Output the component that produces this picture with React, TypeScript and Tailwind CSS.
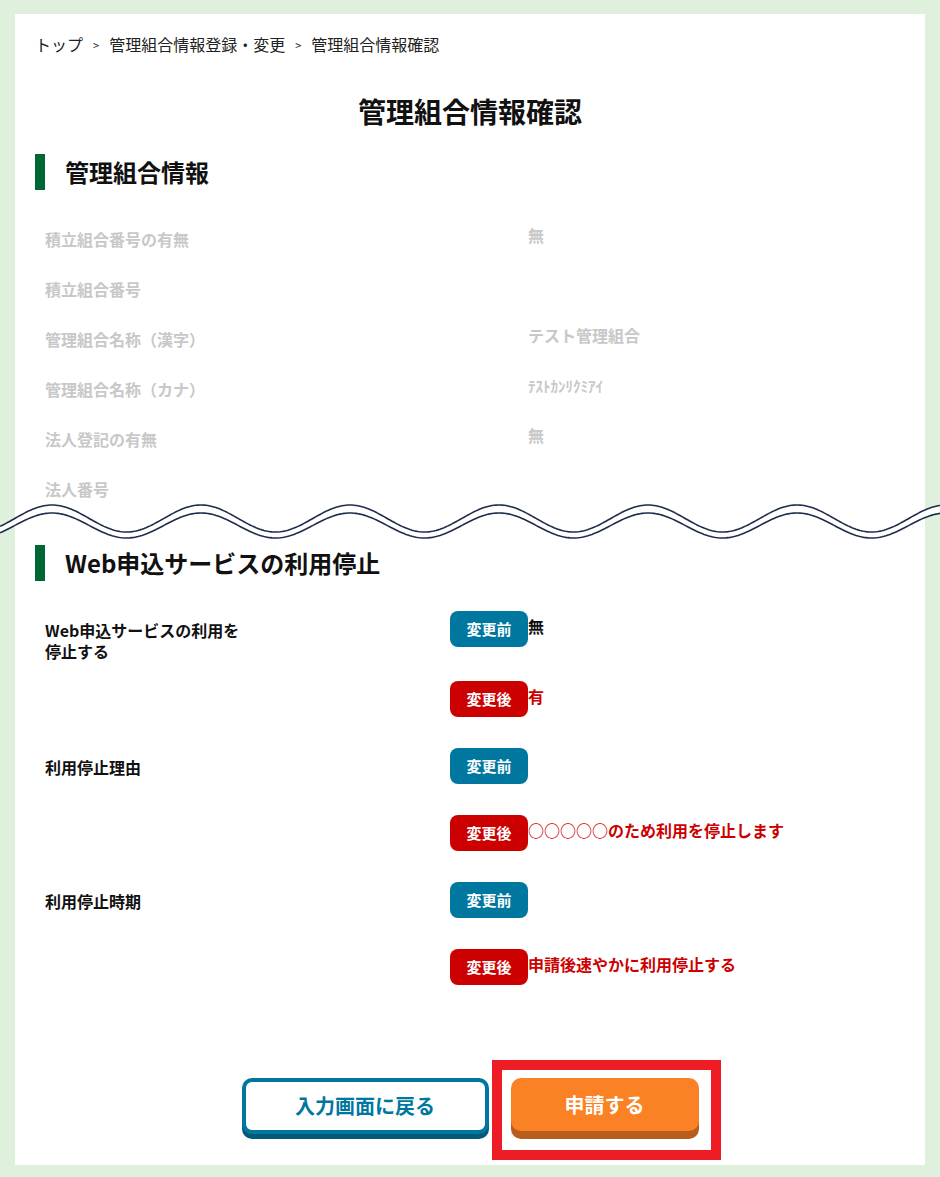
import React from "react";

function wavePoints(center: number, amp: number, period: number, phase: number) {
  const pts: [number, number][] = [];
  for (let x = 0; x <= 940; x += 2) {
    const y = center - amp * Math.cos((2 * Math.PI * (x - phase)) / period);
    pts.push([x, y]);
  }
  return pts;
}

function Wave() {
  const top = wavePoints(19.5, 13.5, 149, 52);
  const bot = wavePoints(26.5, 12.5, 149, 52);
  const toD = (p: [number, number][]) =>
    p.map((q, i) => `${i === 0 ? "M" : "L"}${q[0]},${q[1].toFixed(2)}`).join(" ");
  const fill =
    toD(top) +
    " " +
    bot
      .slice()
      .reverse()
      .map((q) => `L${q[0]},${q[1].toFixed(2)}`)
      .join(" ") +
    " Z";
  return (
    <svg width="940" height="45" viewBox="0 0 940 45" className="block -ml-[35px] max-w-none">
      <path d={fill} fill="#ffffff" />
      <path d={toD(top)} fill="none" stroke="#1f2c4c" strokeWidth="1.6" />
      <path d={toD(bot)} fill="none" stroke="#1f2c4c" strokeWidth="1.6" />
    </svg>
  );
}

function SectionHeader({ children }: { children: React.ReactNode }) {
  return (
    <div className="flex items-center h-[36px]">
      <div className="w-[10px] h-[36px] bg-[#006633]" />
      <h2 className="ml-[20px] text-[24px] leading-[36px] font-bold text-[#111]">{children}</h2>
    </div>
  );
}

const greyRows: { label: string; value: string; small?: boolean }[] = [
  { label: "積立組合番号の有無", value: "無" },
  { label: "積立組合番号", value: "" },
  { label: "管理組合名称（漢字）", value: "テスト管理組合" },
  { label: "管理組合名称（カナ）", value: "ﾃｽﾄｶﾝﾘｸﾐｱｲ", small: true },
  { label: "法人登記の有無", value: "無" },
  { label: "法人番号", value: "" },
];

type Row = {
  label?: React.ReactNode;
  kind: "before" | "after";
  value: string;
  mb: string;
};

const rows: Row[] = [
  {
    label: (
      <>
        Web申込サービスの利用を
        <br />
        停止する
      </>
    ),
    kind: "before",
    value: "無",
    mb: "mb-[34px]",
  },
  { kind: "after", value: "有", mb: "mb-[31px]" },
  { label: "利用停止理由", kind: "before", value: "", mb: "mb-[31px]" },
  { kind: "after", value: "○○○○○のため利用を停止します", mb: "mb-[31px]" },
  { label: "利用停止時期", kind: "before", value: "", mb: "mb-[31px]" },
  { kind: "after", value: "申請後速やかに利用停止する", mb: "" },
];

export default function App() {
  return (
    <div className="w-[940px] min-h-[1177px] bg-[#dff0dc] pt-[14px] pb-[12px] px-[15px] font-['Noto_Sans_CJK_JP',sans-serif]">
      <div className="bg-white h-[1151px] px-[20px] pt-[16px]">
        {/* breadcrumb */}
        <nav className="flex items-center text-[16px] leading-[24px] text-[#222]">
          <span>トップ</span>
          <span className="mx-[10px] text-[11px] leading-[24px] pt-[3px]">&gt;</span>
          <span>管理組合情報登録・変更</span>
          <span className="mx-[10px] text-[11px] leading-[24px] pt-[3px]">&gt;</span>
          <span>管理組合情報確認</span>
        </nav>

        <h1 className="mt-[34px] text-center text-[28px] leading-[40px] font-bold text-[#111]">
          管理組合情報確認
        </h1>

        <div className="mt-[23px]">
          <SectionHeader>管理組合情報</SectionHeader>
        </div>

        <div className="mt-[24px] h-[288px] overflow-hidden">
          {greyRows.map((r, i) => (
            <div key={i} className="flex h-[50px] text-[#c8c8c8] font-bold">
              <div className="w-[493px] pl-[10px] pt-[13px] text-[16px] leading-[24px]">{r.label}</div>
              <div className={`leading-[24px] ${r.small ? "text-[15px] pt-[10px]" : "text-[16px] pt-[9px]"}`}>
                {r.value}
              </div>
            </div>
          ))}
        </div>

        <div className="-mt-[3px]">
          <Wave />
        </div>

        <div className="mt-[1px]">
          <SectionHeader>Web申込サービスの利用停止</SectionHeader>
        </div>

        <div className="mt-[30px]">
          {rows.map((r, i) => (
            <div key={i} className={`flex h-[36px] ${r.mb}`}>
              <div className="w-[415px] shrink-0 pl-[10px] pt-[9px] text-[16px] leading-[21px] font-bold text-[#111]">
                {r.label}
              </div>
              <div
                className={`w-[78px] h-[36px] shrink-0 rounded-[8px] flex items-center justify-center text-white font-bold text-[15px] ${
                  r.kind === "before" ? "bg-[#00779f]" : "bg-[#cc0000]"
                }`}
              >
                {r.kind === "before" ? "変更前" : "変更後"}
              </div>
              <div
                className={`pt-[5px] text-[16px] leading-[20px] font-bold ${
                  r.kind === "before" ? "text-[#111]" : "text-[#cc0000]"
                }`}
              >
                {r.value}
              </div>
            </div>
          ))}
        </div>

        <div className="mt-[93px] flex justify-center gap-[22px]">
          <button className="w-[247px] h-[56px] rounded-[10px] border-[4px] border-[#00779f] bg-white text-[#00779f] text-[20px] font-bold shadow-[0_5px_0_#005a78]">
            入力画面に戻る
          </button>
          <div className="relative">
            <button className="w-[188px] h-[53px] rounded-[10px] bg-[#fb8224] text-white text-[20px] font-bold shadow-[0_8px_0_#b95d1c]">
              申請する
            </button>
            <div className="absolute left-[-19px] right-[-22px] top-[-18px] bottom-[-26px] border-[10px] border-[#ee1c24] pointer-events-none" />
          </div>
        </div>
      </div>
    </div>
  );
}
